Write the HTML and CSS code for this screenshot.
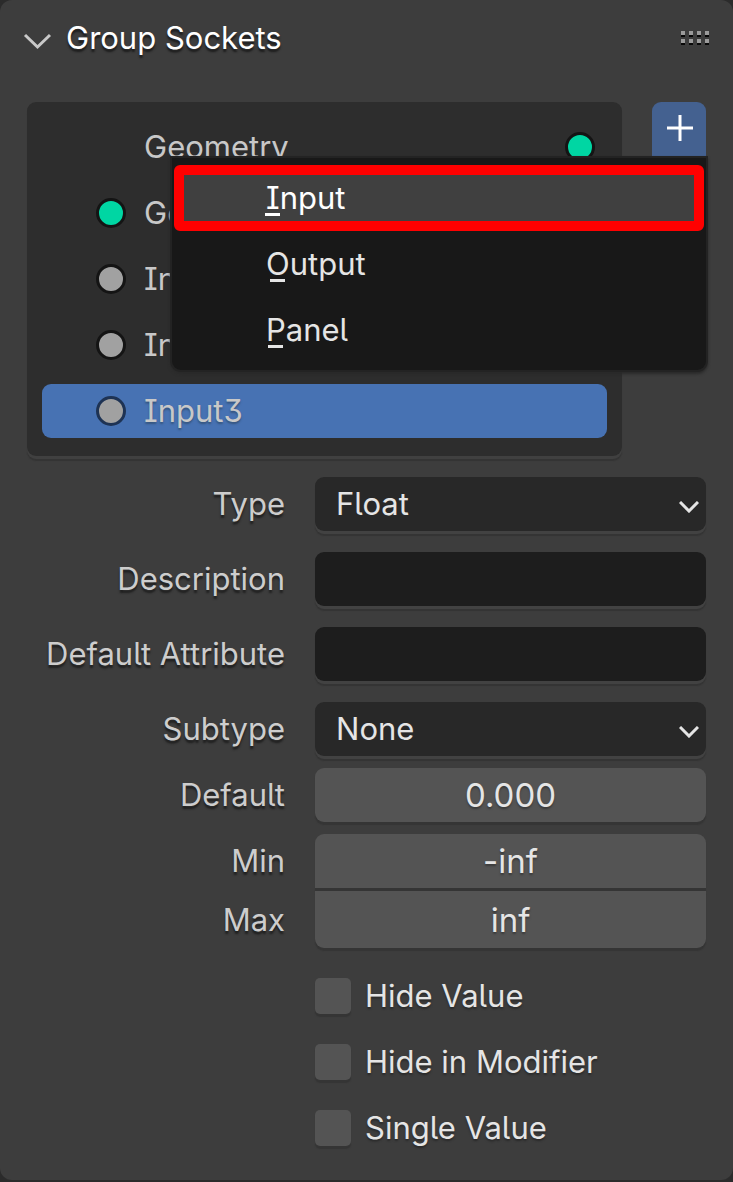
FILE: index.html
```html
<!DOCTYPE html>
<html lang="en">
<head>
<meta charset="utf-8">
<meta name="viewport" content="width=device-width, initial-scale=1">
<title>Group Sockets</title>
<link rel="stylesheet" href="styles.css">
</head>
<body>
<main class="panel">
  <header class="panel-header">
    <button class="panel-toggle" type="button" aria-expanded="true">
      <svg class="toggle-icon" viewBox="0 0 30 24" aria-hidden="true"><path d="M3 9 15.500 21 28 9"/></svg>
      <span>Group Sockets</span>
    </button>
    <svg class="grip" viewBox="0 0 28 14" aria-hidden="true">
      <path class="grip-shade" d="M0 4h4v2H0zM8 4h4v2H8zM16 4h4v2h-4zM24 4h4v2h-4zM0 12h4v2H0zM8 12h4v2H8zM16 12h4v2h-4zM24 12h4v2h-4z"/>
      <path class="grip-dot" d="M0 0h4v4H0zM8 0h4v4H8zM16 0h4v4h-4zM24 0h4v4h-4zM0 8h4v4H0zM8 8h4v4H8zM16 8h4v4h-4zM24 8h4v4h-4z"/>
    </svg>
  </header>

  <section class="sockets">
    <ul class="socket-list">
      <li class="socket"><span class="dot dot-none"></span><span class="socket-name">Geometry</span><span class="dot dot-geometry"></span></li>
      <li class="socket"><span class="dot dot-geometry"></span><span class="socket-name">Geometry</span></li>
      <li class="socket"><span class="dot"></span><span class="socket-name">Input</span></li>
      <li class="socket"><span class="dot"></span><span class="socket-name">Input2</span></li>
      <li class="socket socket-selected"><span class="dot"></span><span class="socket-name">Input3</span></li>
    </ul>
    <button class="add-button" type="button" aria-label="Add item">
      <svg class="add-icon" viewBox="0 0 28 28" aria-hidden="true"><path d="M14 1v26M1 14h26"/></svg>
    </button>
    <div class="menu" role="menu">
      <button class="menu-item menu-item-active" type="button" role="menuitem"><span class="key">I</span>nput</button>
      <button class="menu-item" type="button" role="menuitem"><span class="key">O</span>utput</button>
      <button class="menu-item" type="button" role="menuitem"><span class="key">P</span>anel</button>
    </div>
  </section>

  <form class="properties">
    <div class="group">
      <div class="row">
        <label for="type">Type</label>
        <div class="select-box">
          <select class="field field-select" id="type"><option>Float</option></select>
          <svg class="chevron" viewBox="0 0 20 12" aria-hidden="true"><path d="M1 1 10 10 19 1"/></svg>
        </div>
      </div>
      <div class="row"><label for="description">Description</label><input class="field" id="description" type="text"></div>
      <div class="row"><label for="attribute">Default Attribute</label><input class="field" id="attribute" type="text"></div>
      <div class="row">
        <label for="subtype">Subtype</label>
        <div class="select-box">
          <select class="field field-select" id="subtype"><option>None</option></select>
          <svg class="chevron" viewBox="0 0 20 12" aria-hidden="true"><path d="M1 1 10 10 19 1"/></svg>
        </div>
      </div>
    </div>
    <div class="row"><label for="default">Default</label><input class="field field-number" id="default" type="text" value="0.000"></div>
    <div class="range">
      <div class="row"><label for="min">Min</label><input class="field field-number field-first" id="min" type="text" value="-inf"></div>
      <div class="row"><label for="max">Max</label><input class="field field-number field-last" id="max" type="text" value="inf"></div>
    </div>
    <div class="row checks">
      <div class="check-column">
        <label class="check"><input class="check-box" type="checkbox">Hide Value</label>
        <label class="check"><input class="check-box" type="checkbox">Hide in Modifier</label>
        <label class="check"><input class="check-box" type="checkbox">Single Value</label>
      </div>
    </div>
  </form>
</main>
</body>
</html>
```

FILE: styles.css
```css
* {
  box-sizing: border-box;
}

body {
  margin: 0;
  background: #2b2b2b;
  color: #e5e5e5;
  font: 400 31px/54px Inter, "Liberation Sans", sans-serif;
  font-feature-settings: "cv05", "cv08", "cv09";
}

button,
input,
select {
  margin: 0;
  padding: 0;
  border: 0;
  background: none;
  color: inherit;
  font: inherit;
  font-feature-settings: inherit;
}

svg {
  display: block;
  flex: none;
}

path {
  fill: none;
}

.panel {
  min-height: 1180px;
  padding: 11px 27px 24px;
  border-radius: 12px;
  background: #3d3d3d;
}

.panel-header {
  display: flex;
  align-items: center;
  justify-content: space-between;
  margin-bottom: 37px;
}

.panel-toggle {
  display: flex;
  align-items: center;
  gap: 14px;
  margin-left: -5px;
  color: #fff;
  text-shadow: 0 3px 2px #1c1c1c;
}

.toggle-icon {
  width: 30px;
  height: 24px;
  stroke: #c9c9c9;
  stroke-width: 3;
}

.grip {
  width: 28px;
  height: 14px;
  margin-right: -3px;
}

.grip-dot {
  fill: #9b9b9b;
}

.grip-shade {
  fill: #080808;
}

.sockets {
  position: relative;
  display: flex;
  align-items: flex-start;
  gap: 30px;
  margin-bottom: 21px;
}

.socket-list {
  display: flex;
  flex: 1;
  flex-direction: column;
  gap: 12px;
  margin: 0;
  padding: 18px 15px;
  border-radius: 9px;
  background: #2d2d2d;
  box-shadow: 0 3px 0 #404040, 0 5px 1px #343434;
  list-style: none;
}

.socket {
  display: flex;
  align-items: center;
  gap: 18px;
  padding: 0 12px 0 54px;
  border-radius: 9px;
  color: #c8c8c8;
}

.socket-name {
  flex: 1;
}

.socket-selected {
  background: #4772b3;
  text-shadow: 0 2px 2px #35557f;
}

.dot {
  width: 30px;
  height: 30px;
  border: 3px solid #141414;
  border-radius: 50%;
  background: #a1a1a1;
}

.socket-selected .dot {
  border-color: #1e3354;
}

.dot-geometry {
  background: #00d6a3;
}

.dot-none {
  visibility: hidden;
}

.add-button {
  display: flex;
  align-items: flex-start;
  width: 54px;
  height: 111px;
  padding: 12px 12px 12px 14px;
  border-radius: 9px;
  background: #446190;
}

.add-icon {
  width: 28px;
  height: 28px;
  stroke: #fff;
  stroke-width: 3;
}

.menu {
  position: absolute;
  top: 56px;
  right: 0;
  left: 145px;
  padding: 7px 2px;
  border-radius: 0 0 9px 9px;
  background: #181818;
  box-shadow: 0 0 0 2px #232323, 0 2px 3px 2px #292929;
}

.menu-item {
  display: block;
  width: 100%;
  height: 66px;
  padding-left: 92px;
  text-align: left;
}

.menu-item-active {
  padding-left: 82px;
  border: 10px solid #f00;
  border-radius: 6px;
  background: #404040;
  color: #fff;
  line-height: 46px;
}

.key {
  position: relative;
}

.key::after {
  position: absolute;
  bottom: 0;
  left: 50%;
  width: 15px;
  height: 3px;
  margin-left: -8px;
  background: currentColor;
  content: "";
}

.properties {
  display: flex;
  flex-direction: column;
  gap: 12px;
}

.group {
  display: flex;
  flex-direction: column;
  gap: 21px;
}

.range {
  display: flex;
  flex-direction: column;
  gap: 3px;
}

.row {
  display: grid;
  grid-template-columns: minmax(0, 33fr) minmax(0, 50fr);
  align-items: center;
  column-gap: 30px;
}

.row > label {
  color: #cdcdcd;
  text-align: right;
  text-shadow: 0 3px 2px #1f1f1f;
  white-space: nowrap;
}

.select-box {
  position: relative;
}

.field {
  display: block;
  width: 100%;
  height: 54px;
  padding: 0 21px;
  border-radius: 9px;
  background: #1d1d1d;
  box-shadow: 0 3px 0 #424242, 0 5px 1px #343434;
}

.field-select {
  appearance: none;
  background: #282828;
}

.chevron {
  position: absolute;
  top: 24px;
  right: 7px;
  width: 20px;
  height: 12px;
  stroke: #e5e5e5;
  stroke-width: 3;
  pointer-events: none;
}

.field-number {
  background: #545454;
  box-shadow: 0 3px 1px #353535;
  font-size: 33px;
  text-align: center;
  text-shadow: 0 2px 2px #3a3a3a;
}

.field-first {
  border-radius: 9px 9px 0 0;
}

.field-last {
  height: 57px;
  border-radius: 0 0 9px 9px;
}

.checks {
  margin-top: 9px;
}

.check-column {
  display: flex;
  grid-column: 2;
  flex-direction: column;
  gap: 12px;
}

.check {
  display: flex;
  align-items: center;
  gap: 14px;
  text-shadow: 0 2px 2px #2a2a2a;
  white-space: nowrap;
}

.check-box {
  width: 36px;
  height: 36px;
  border-radius: 5px;
  background: #545454;
  box-shadow: 0 3px 1px #353535;
  appearance: none;
}
```
